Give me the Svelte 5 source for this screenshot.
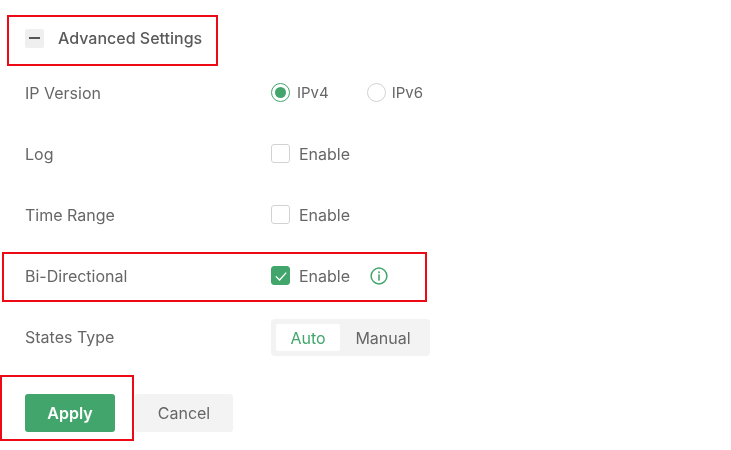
<script>
  // advanced settings panel, red boxes are review annotations drawn over the form
  let ipVersion = $state('ipv4');
  let log = $state(false);
  let timeRange = $state(false);
  let biDirectional = $state(true);
  let statesType = $state('auto');
</script>

<div class="page">
  <div class="header">
    <span class="collapse"><span class="dash"></span></span>
    <span class="heading">Advanced Settings</span>
  </div>

  <div class="row">
    <span class="label">IP Version</span>
    <div class="control">
      <button class="radio" onclick={() => (ipVersion = 'ipv4')}>
        <span class="dot" class:on={ipVersion === 'ipv4'}></span>IPv4
      </button>
      <button class="radio second" onclick={() => (ipVersion = 'ipv6')}>
        <span class="dot" class:on={ipVersion === 'ipv6'}></span>IPv6
      </button>
    </div>
  </div>

  <div class="row">
    <span class="label">Log</span>
    <div class="control">
      <button class="check" onclick={() => (log = !log)}>
        <span class="box" class:on={log}></span>Enable
      </button>
    </div>
  </div>

  <div class="row">
    <span class="label">Time Range</span>
    <div class="control">
      <button class="check" onclick={() => (timeRange = !timeRange)}>
        <span class="box" class:on={timeRange}></span>Enable
      </button>
    </div>
  </div>

  <div class="row">
    <span class="label">Bi-Directional</span>
    <div class="control">
      <button class="check" onclick={() => (biDirectional = !biDirectional)}>
        <span class="box" class:on={biDirectional}>
          {#if biDirectional}
            <svg viewBox="0 0 18 18" width="18" height="18">
              <path d="M3.8 9.4 L7.6 13 L14.2 5.6" fill="none" stroke="#fff" stroke-width="1.3" />
            </svg>
          {/if}
        </span>Enable
      </button>
      <svg class="info" viewBox="0 0 18 18" width="18" height="18">
        <circle cx="9" cy="9" r="7.9" fill="none" stroke="#42a66c" stroke-width="1.5" />
        <rect x="8.2" y="4.4" width="1.6" height="1.8" fill="#42a66c" />
        <rect x="8.2" y="7.4" width="1.6" height="6.2" fill="#42a66c" />
      </svg>
    </div>
  </div>

  <div class="row">
    <span class="label">States Type</span>
    <div class="control">
      <div class="segmented">
        <button class:active={statesType === 'auto'} onclick={() => (statesType = 'auto')}>Auto</button>
        <button class:active={statesType === 'manual'} onclick={() => (statesType = 'manual')}>Manual</button>
      </div>
    </div>
  </div>

  <div class="actions">
    <button class="btn primary">Apply</button>
    <button class="btn">Cancel</button>
  </div>

  <div class="mark mark-header"></div>
  <div class="mark mark-bidi"></div>
  <div class="mark mark-apply"></div>
</div>

<style>
  :global(body) { margin: 0; background: #fff; }
  .page {
    position: relative;
    width: 731px;
    height: 450px;
    overflow: hidden;
    box-sizing: border-box;
    padding: 25px 0 0 25px;
    font-family: Inter, "Noto Sans", sans-serif;
    font-size: 16px;
    color: #666;
    filter: blur(0.35px);
  }
  button {
    font: inherit;
    color: inherit;
    background: none;
    border: 0;
    padding: 0;
    cursor: pointer;
  }
  .header { display: flex; align-items: center; height: 26px; margin-bottom: 11px; }
  .collapse {
    display: flex;
    align-items: center;
    justify-content: center;
    width: 19px;
    height: 19px;
    border-radius: 2px;
    background: #efefef;
    margin-right: 14px;
  }
  .dash { width: 11px; height: 1.5px; background: #555; }
  .heading { color: #5a5a5a; font-weight: 500; }
  .row { display: flex; align-items: center; height: 61px; }
  .label { width: 246px; }
  .control { display: flex; align-items: center; }
  .radio, .check { display: flex; align-items: center; }
  .radio { font-size: 15px; }
  .radio.second { margin-left: 38px; }
  .radio.second .dot { margin-right: 6px; }
  .dot {
    position: relative;
    width: 17px;
    height: 17px;
    border: 1px solid #d2d2d2;
    border-radius: 50%;
    margin-right: 7px;
    background: #fff;
  }
  .dot.on { border-color: #42a66c; }
  .dot.on::after {
    content: '';
    position: absolute;
    inset: 3px;
    border-radius: 50%;
    background: #42a66c;
  }
  .box {
    display: flex;
    width: 17px;
    height: 17px;
    border: 1px solid #d2d2d2;
    border-radius: 3px;
    margin-right: 9px;
    background: #fff;
  }
  .box.on { background: #42a66c; border-color: #42a66c; }
  .box svg { margin: -0.5px; flex: none; }
  .info { margin-left: 20px; }
  .segmented {
    display: flex;
    margin-top: 2px;
    padding: 5px 4px 5px 5px;
    width: 159px;
    box-sizing: border-box;
    height: 37px;
    background: #f3f3f3;
    border-radius: 4px;
  }
  .segmented button { flex: 1; border-radius: 2px; }
  .segmented button.active { flex: none; width: 64px; background: #fff; color: #42a66c; }
  .actions { display: flex; gap: 20px; margin-top: 27px; }
  .btn {
    width: 98px;
    height: 38px;
    border-radius: 3px;
    background: #f3f3f3;
  }
  .btn.primary { width: 90px; background: #42a66c; color: #fff; font-weight: 600; }
  .mark { position: absolute; border: 2px solid #ee0a14; box-sizing: border-box; }
  .mark-header { left: 7px; top: 15px; width: 211px; height: 51px; }
  .mark-bidi { left: 2px; top: 252px; width: 425px; height: 50px; }
  .mark-apply { left: 0; top: 375px; width: 134px; height: 66px; }
</style>
